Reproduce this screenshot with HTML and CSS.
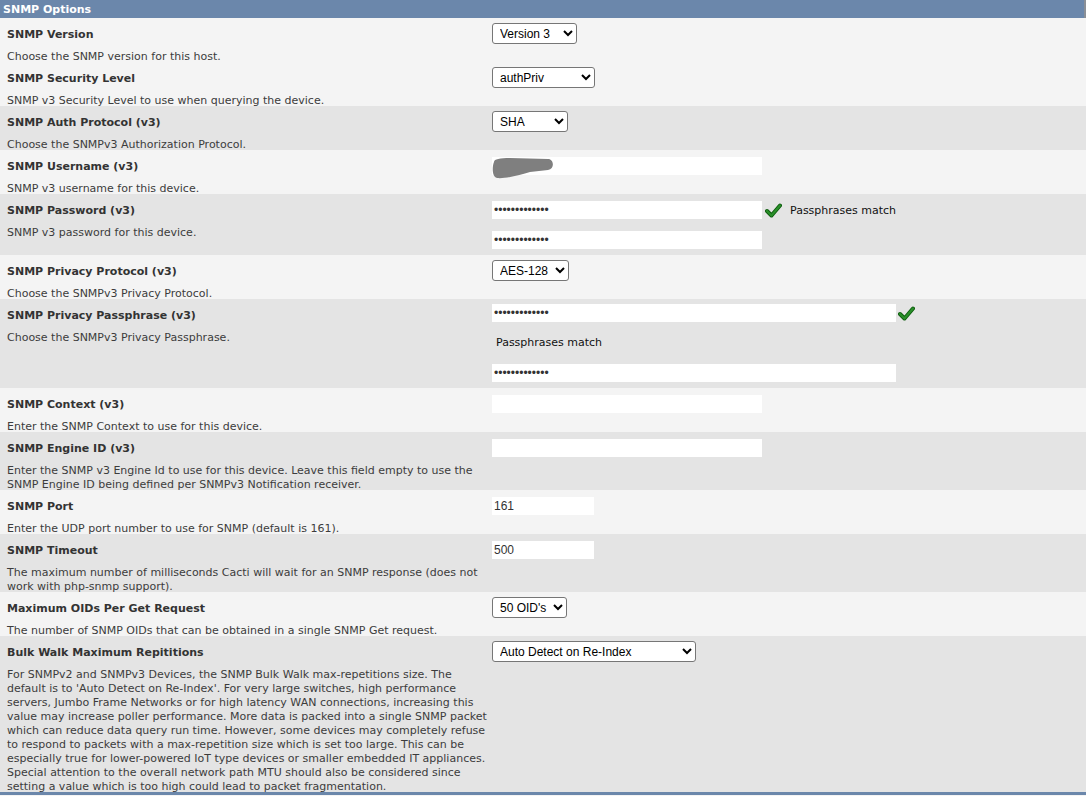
FILE: index.html
```html
<!DOCTYPE html>
<html>
<head>
<meta charset="utf-8">
<link rel="stylesheet" href="styles.css">
</head>
<body>
<div class="panel">
  <div class="head">SNMP Options</div>

  <div class="row light">
    <div class="lbl"><div class="name">SNMP Version</div><div class="desc">Choose the SNMP version for this host.</div></div>
    <div class="fld"><select class="sel w85"><option>Version 3</option></select></div>
  </div>

  <div class="row light">
    <div class="lbl"><div class="name">SNMP Security Level</div><div class="desc">SNMP v3 Security Level to use when querying the device.</div></div>
    <div class="fld"><select class="sel w103"><option>authPriv</option></select></div>
  </div>

  <div class="row dark">
    <div class="lbl"><div class="name">SNMP Auth Protocol (v3)</div><div class="desc">Choose the SNMPv3 Authorization Protocol.</div></div>
    <div class="fld"><select class="sel w76"><option>SHA</option></select></div>
  </div>

  <div class="row light">
    <div class="lbl"><div class="name">SNMP Username (v3)</div><div class="desc">SNMP v3 username for this device.</div></div>
    <div class="fld">
      <div class="redact-wrap">
        <input class="txt w270" type="text" value="">
        <svg class="redact" width="64" height="22" viewBox="0 0 64 22"><path d="M2 4 C2 1 8 0 18 0 L56 1 C62 1 63 11 56 12 L38 14 C28 17 13 21 5 20 C0 19 0 9 2 4 Z" fill="#7f7f7f"/></svg>
      </div>
    </div>
  </div>

  <div class="row dark">
    <div class="lbl"><div class="name">SNMP Password (v3)</div><div class="desc">SNMP v3 password for this device.</div></div>
    <div class="fld pw">
      <div class="pwline">
        <input class="txt w270" type="password" value="xxxxxxxxxxxxx">
        <svg class="check" width="17" height="15" viewBox="0 0 17 15"><path d="M2 8 L6.5 12.5 L15 2.5" fill="none" stroke="#0d5c0d" stroke-width="4" stroke-linecap="round" stroke-linejoin="round"/><path d="M2 8 L6.5 12.5 L15 2.5" fill="none" stroke="#2a8f2a" stroke-width="2.2" stroke-linecap="round" stroke-linejoin="round"/></svg>
        <span class="match">Passphrases match</span>
      </div>
      <input class="txt w270 second" type="password" value="xxxxxxxxxxxxx">
    </div>
  </div>

  <div class="row light">
    <div class="lbl"><div class="name">SNMP Privacy Protocol (v3)</div><div class="desc">Choose the SNMPv3 Privacy Protocol.</div></div>
    <div class="fld"><select class="sel w77"><option>AES-128</option></select></div>
  </div>

  <div class="row dark">
    <div class="lbl"><div class="name">SNMP Privacy Passphrase (v3)</div><div class="desc">Choose the SNMPv3 Privacy Passphrase.</div></div>
    <div class="fld pp">
      <div class="pwline">
        <input class="txt w404" type="password" value="xxxxxxxxxxxxx">
        <svg class="check" width="17" height="15" viewBox="0 0 17 15"><path d="M2 8 L6.5 12.5 L15 2.5" fill="none" stroke="#0d5c0d" stroke-width="4" stroke-linecap="round" stroke-linejoin="round"/><path d="M2 8 L6.5 12.5 L15 2.5" fill="none" stroke="#2a8f2a" stroke-width="2.2" stroke-linecap="round" stroke-linejoin="round"/></svg>
      </div>
      <div class="match block">Passphrases match</div>
      <input class="txt w404" type="password" value="xxxxxxxxxxxxx">
    </div>
  </div>

  <div class="row light">
    <div class="lbl"><div class="name">SNMP Context (v3)</div><div class="desc">Enter the SNMP Context to use for this device.</div></div>
    <div class="fld"><input class="txt w270" type="text" value=""></div>
  </div>

  <div class="row dark">
    <div class="lbl"><div class="name">SNMP Engine ID (v3)</div><div class="desc">Enter the SNMP v3 Engine Id to use for this device. Leave this field empty to use the SNMP Engine ID being defined per SNMPv3 Notification receiver.</div></div>
    <div class="fld"><input class="txt w270" type="text" value=""></div>
  </div>

  <div class="row light">
    <div class="lbl"><div class="name">SNMP Port</div><div class="desc">Enter the UDP port number to use for SNMP (default is 161).</div></div>
    <div class="fld"><input class="txt w102" type="text" value="161"></div>
  </div>

  <div class="row dark">
    <div class="lbl"><div class="name">SNMP Timeout</div><div class="desc">The maximum number of milliseconds Cacti will wait for an SNMP response (does not work with php-snmp support).</div></div>
    <div class="fld"><input class="txt w102" type="text" value="500"></div>
  </div>

  <div class="row light">
    <div class="lbl"><div class="name">Maximum OIDs Per Get Request</div><div class="desc">The number of SNMP OIDs that can be obtained in a single SNMP Get request.</div></div>
    <div class="fld"><select class="sel w75"><option>50 OID's</option></select></div>
  </div>

  <div class="row dark">
    <div class="lbl"><div class="name">Bulk Walk Maximum Repititions</div><div class="desc">For SNMPv2 and SNMPv3 Devices, the SNMP Bulk Walk max-repetitions size. The default is to 'Auto Detect on Re-Index'. For very large switches, high performance servers, Jumbo Frame Networks or for high latency WAN connections, increasing this value may increase poller performance. More data is packed into a single SNMP packet which can reduce data query run time. However, some devices may completely refuse to respond to packets with a max-repetition size which is set too large. This can be especially true for lower-powered IoT type devices or smaller embedded IT appliances. Special attention to the overall network path MTU should also be considered since setting a value which is too high could lead to packet fragmentation.</div></div>
    <div class="fld"><select class="sel w204"><option>Auto Detect on Re-Index</option></select></div>
  </div>

  <div class="foot"></div>
</div>
</body>
</html>
```
FILE: styles.css
```css
html, body {
  margin: 0;
  padding: 0;
  background: #f4f4f4;
}
.panel {
  width: 1086px;
  font-family: "DejaVu Sans", Verdana, sans-serif;
  font-size: 11px;
  color: #333333;
}
.head {
  height: 18px;
  line-height: 20px;
  background: #6b87ab;
  color: #ffffff;
  font-weight: bold;
  padding-left: 3px;
  border-right: 2px solid #8a8f96;
}
.row {
  display: flex;
  align-items: flex-start;
}
.light { background: #f4f4f4; }
.dark { background: #e4e4e4; }
.lbl {
  width: 483px;
  flex: none;
  padding: 10px 2px 0 7px;
}
.name {
  font-weight: bold;
  line-height: 14px;
  color: #333333;
}
.desc {
  margin-top: 8px;
  margin-bottom: -2px;
  line-height: 14px;
  color: #3c3c3c;
}
.fld {
  padding-top: 5px;
}
.sel {
  height: 21px;
  box-sizing: border-box;
  border: 1px solid #767676;
  border-radius: 3px;
  background: #ffffff;
  color: #000000;
  font-family: "Liberation Sans", Arial, sans-serif;
  font-size: 12px;
  padding: 0 0 0 3px;
  margin: 0;
}
.w85 { width: 85px; }
.w103 { width: 103px; }
.w76 { width: 76px; }
.w77 { width: 77px; }
.w75 { width: 75px; }
.w204 { width: 204px; }
.txt {
  display: block;
  height: 18px;
  box-sizing: border-box;
  border: none;
  outline: none;
  background: #ffffff;
  color: #333333;
  font-family: "Liberation Sans", Arial, sans-serif;
  font-size: 12px;
  padding: 0 2px;
  margin: 2px 0 0 0;
}
.w270 { width: 270px; }
.w404 { width: 404px; }
.w102 { width: 102px; }
.redact-wrap {
  position: relative;
}
.redact {
  position: absolute;
  left: 0;
  top: 1px;
}
.pw {
  padding-bottom: 6px;
}
.pwline {
  display: flex;
  align-items: center;
}
.pwline .check {
  margin-left: 3px;
  margin-top: 2px;
}
.match {
  color: #111111;
  line-height: 14px;
  margin-left: 8px;
  margin-top: 3px;
}
.pw .second {
  margin-top: 12px;
}
.pp {
  padding-top: 5px;
  padding-bottom: 6px;
}
.pp .txt {
  margin-top: 0;
}
.pp .pwline .check {
  margin-left: 2px;
  margin-top: 0;
}
.match.block {
  margin: 14px 0 14px 4px;
}
.foot {
  height: 3px;
  background: #6b87ab;
}
```
